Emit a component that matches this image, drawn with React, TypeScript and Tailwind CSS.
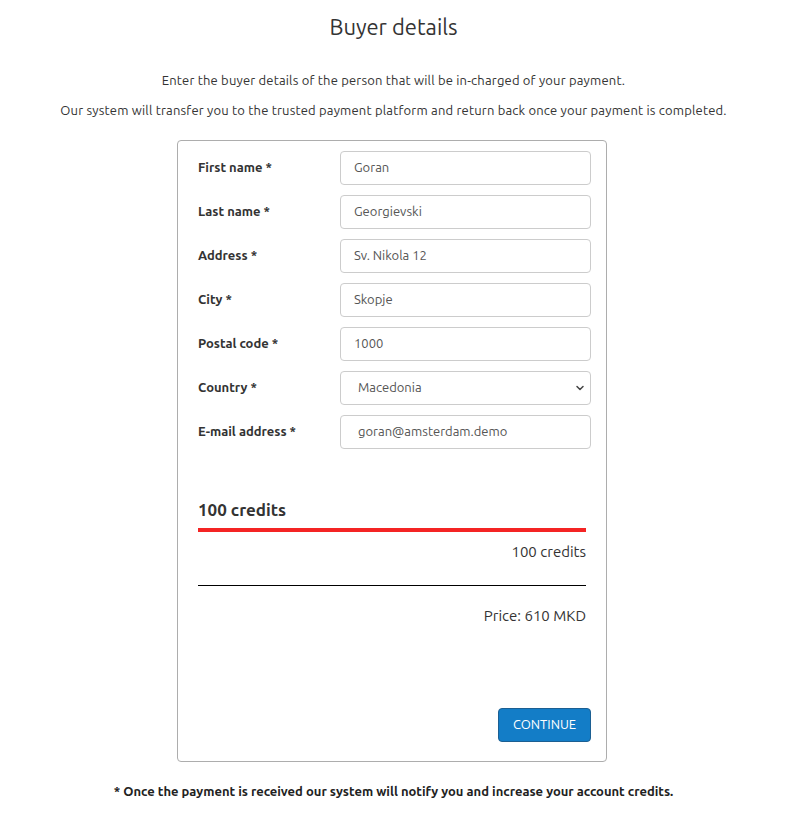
import { ChevronDown } from "lucide-react";

const fields = [
  { label: "First name *", value: "Goran" },
  { label: "Last name *", value: "Georgievski" },
  { label: "Address *", value: "Sv. Nikola 12" },
  { label: "City *", value: "Skopje" },
  { label: "Postal code *", value: "1000" },
];

const App = () => {
  return (
    <div className="min-h-screen bg-white text-[#333] font-['Ubuntu','Liberation_Sans',Arial,sans-serif]">
      <h1 className="pt-[13px] text-center text-[22px] leading-[28px] text-[#333]">Buyer details</h1>

      <p className="mt-[30px] text-center text-[13px] leading-[18px] tracking-[0.18px]">
        Enter the buyer details of the person that will be in-charged of your payment.
      </p>
      <p className="mt-[12px] text-center text-[13px] leading-[18px] tracking-[0.18px]">
        Our system will transfer you to the trusted payment platform and return back once your payment is completed.
      </p>

      {/* form card */}
      <div className="ml-[177px] mt-[21px] w-[430px] rounded-[4px] border border-[#adadad] pb-[19px] pt-[10px]">
        <div className="flex flex-col gap-[10px] pl-[20px] pr-[15px]">
          {fields.map((f) => (
            <div key={f.label} className="flex items-center">
              <label className="w-[142px] text-[13px] font-bold text-[#333]">{f.label}</label>
              <div className="flex h-[34px] flex-1 items-center rounded-[4px] border border-[#ccc] px-[13px] text-[13px] text-[#555]">
                {f.value}
              </div>
            </div>
          ))}
          <div className="flex items-center">
            <label className="w-[142px] text-[13px] font-bold text-[#333]">Country *</label>
            <div className="flex h-[34px] flex-1 items-center justify-between rounded-[4px] border border-[#ccc] pl-[17px] pr-[4px] text-[13px] text-[#555]">
              <span>Macedonia</span>
              <ChevronDown className="h-[12px] w-[12px] text-[#444]" strokeWidth={3} />
            </div>
          </div>
          <div className="flex items-center">
            <label className="w-[142px] text-[13px] font-bold text-[#333]">E-mail address *</label>
            <div className="flex h-[34px] flex-1 items-center rounded-[4px] border border-[#ccc] px-[17px] text-[13px] text-[#555]">
              goran@amsterdam.demo
            </div>
          </div>
        </div>

        {/* credits */}
        <div className="mt-[50px] px-[20px]">
          <div className="text-[17px] font-bold leading-[22px] text-[#333]">100 credits</div>
          <div className="mt-[7px] h-[4px] bg-[#f42424]" />
          <div className="mt-[10px] text-right text-[15px] leading-[20px] text-[#333]">100 credits</div>
          <div className="mt-[23px] h-px bg-black" />
          <div className="mt-[20px] text-right text-[15px] leading-[20px] text-[#333]">Price: 610 MKD</div>
          <div className="mt-[82px] flex justify-end">
            <button className="mr-[-5px] h-[34px] w-[93px] rounded-[4px] border border-[#1c5f92] bg-[#137dc7] text-[13px] text-white">
              CONTINUE
            </button>
          </div>
        </div>
      </div>

      <p className="mt-[20px] text-center text-[13px] font-bold text-[#222]">
        * Once the payment is received our system will notify you and increase your account credits.
      </p>
    </div>
  );
};

export default App;
